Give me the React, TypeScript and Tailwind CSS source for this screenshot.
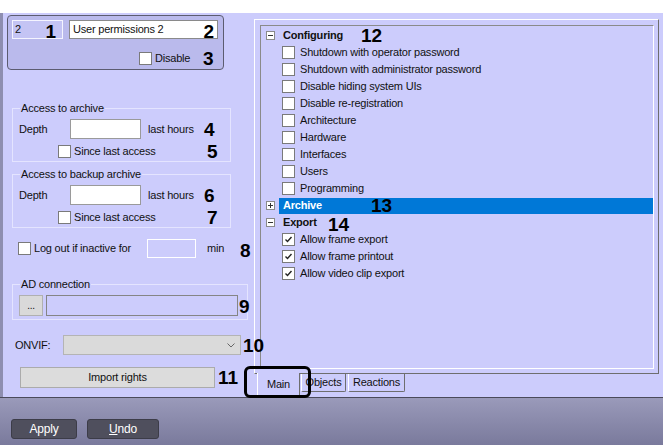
import React from "react";

const font = "font-['Liberation_Sans',Arial,sans-serif]";

function Num({children, className = ""}: {children: React.ReactNode; className?: string}) {
    return (
        <span className={`shrink-0 text-[19px] font-bold leading-none tracking-normal text-black ${className}`}>{children}</span>
    );
}

function Box({checked = false, className = ""}: {checked?: boolean; className?: string}) {
    return (
        <span className={`flex h-[13px] w-[13px] shrink-0 items-center justify-center border border-[#7a7a7a] bg-white ${className}`}>
            {checked && (
                <svg width="9" height="9" viewBox="0 0 9 9">
                    <path d="M1.5 4.5 L3.5 6.5 L7.5 2" fill="none" stroke="#222" strokeWidth="1.4" />
                </svg>
            )}
        </span>
    );
}

function Expander({open}: {open: boolean}) {
    return (
        <span className="relative flex h-[9px] w-[9px] shrink-0 items-center justify-center border border-[#8a8a8a] bg-white">
            <span className="absolute h-px w-[5px] bg-[#333]" />
            {!open && <span className="absolute h-[5px] w-px bg-[#333]" />}
        </span>
    );
}

const configItems = [
    "Shutdown with operator password",
    "Shutdown with administrator password",
    "Disable hiding system UIs",
    "Disable re-registration",
    "Architecture",
    "Hardware",
    "Interfaces",
    "Users",
    "Programming"
];

const exportItems = ["Allow frame export", "Allow frame printout", "Allow video clip export"];

function ArchiveGroup({title, n1, n2}: {title: string; n1: string; n2: string}) {
    return (
        <div className="relative ml-[9px] h-[54px] w-[219px] border border-[#e4e4ff]">
            <span className="absolute -top-[8px] left-[7px] bg-[#ccccfc] px-[1px] leading-[14px]">{title}</span>
            <div className="mt-[10px] flex h-[20px] items-center">
                <span className="ml-[6px] w-[51px] shrink-0">Depth</span>
                <span className="h-[20px] w-[71px] shrink-0 border border-[#9a9a9a] bg-white" />
                <span className="ml-[7px] w-[56px] shrink-0">last hours</span>
                <Num>{n1}</Num>
            </div>
            <div className="mt-[6px] flex h-[13px] items-center">
                <Box className="ml-[45px]" />
                <span className="ml-[3px] w-[133px] shrink-0">Since last access</span>
                <Num>{n2}</Num>
            </div>
        </div>
    );
}

export default function App() {
    return (
        <div className={`flex h-[445px] w-[663px] flex-col overflow-hidden bg-white text-[11px] tracking-[-0.2px] text-[#111] ${font}`}>
            <div className="h-[13px] shrink-0 bg-white" />
            <div className="relative flex h-[384px] shrink-0 border-l-[3px] border-[#8e8eb0] bg-[#ccccfc]">
                {/* left column */}
                <div className="relative z-10 flex w-[251px] shrink-0 flex-col">
                    <div className="ml-[4px] mt-[2px] h-[55px] w-[217px] rounded-[4px] border border-[#5c5c70] bg-[#babaec]">
                        <div className="mt-[4px] flex">
                            <div className="relative ml-[4px] flex h-[19px] w-[51px] shrink-0 items-center border border-[#f4f4ff] bg-[#c4c4f4] pl-[2px]">
                                2
                                <Num className="absolute right-[6px] top-[1px]">1</Num>
                            </div>
                            <div className="relative ml-[6px] flex h-[19px] w-[149px] shrink-0 items-center border border-[#8a8a8a] bg-white pl-[3px]">
                                User permissions 2
                                <Num className="absolute right-[3px] top-[1px]">2</Num>
                            </div>
                        </div>
                        <div className="mt-[10px] flex items-center">
                            <Box className="ml-[131px]" />
                            <span className="ml-[3px] w-[48px] shrink-0">Disable</span>
                            <Num>3</Num>
                        </div>
                    </div>

                    <div className="mt-[38px]">
                        <ArchiveGroup title="Access to archive" n1="4" n2="5" />
                    </div>
                    <div className="mt-[12px]">
                        <ArchiveGroup title="Access to backup archive" n1="6" n2="7" />
                    </div>

                    <div className="mt-[11px] flex h-[19px] items-center">
                        <Box className="ml-[15px]" />
                        <span className="ml-[3px] w-[113px] shrink-0">Log out if inactive for</span>
                        <span className="h-[19px] w-[49px] shrink-0 border border-white" />
                        <span className="ml-[11px] w-[33px] shrink-0">min</span>
                        <Num className="mt-[4px]">8</Num>
                    </div>

                    <div className="relative ml-[9px] mt-[26px] h-[36px] w-[236px] border border-[#e4e4ff]">
                        <span className="absolute -top-[8px] left-[7px] bg-[#ccccfc] px-[1px] leading-[14px]">AD connection</span>
                        <div className="ml-[6px] mt-[10px] flex h-[21px] items-center">
                            <span className="flex h-[21px] w-[24px] shrink-0 items-center justify-center border border-[#b0b0b0] bg-[#d9d9d9] text-[10px]">...</span>
                            <span className="ml-[3px] h-[21px] w-[192px] shrink-0 border border-[#858585] bg-[#ccccfc]" />
                            <Num className="ml-[1px] mt-[2px]">9</Num>
                        </div>
                    </div>

                    <div className="mt-[15px] flex h-[20px] items-center">
                        <span className="ml-[12px] w-[48px] shrink-0">ONVIF:</span>
                        <span className="flex h-[20px] w-[178px] shrink-0 items-center justify-end border border-[#b4b4b4] bg-[#dadada] pr-[5px]">
                            <svg width="8" height="5" viewBox="0 0 8 5">
                                <path d="M0.5 0.5 L4 4 L7.5 0.5" fill="none" stroke="#666" strokeWidth="1" />
                            </svg>
                        </span>
                        <Num className="ml-[2px]">10</Num>
                    </div>

                    <div className="mt-[12px] flex h-[21px] items-center">
                        <span className="ml-[17px] flex h-[21px] w-[195px] shrink-0 items-center justify-center border border-[#ababab] bg-[#dcdcdc]">Import rights</span>
                        <Num className="ml-[3px]">11</Num>
                    </div>
                </div>

                {/* right panel */}
                <div className="flex flex-col">
                    <div className="mt-[6px] h-[355px] w-[405px] border border-t-white border-l-white border-r-[#6e6e6e] border-b-[#6e6e6e] pl-[5px] pr-[5px] pt-[5px]">
                        <div className="h-[344px] w-[394px] border border-t-[#8a8a8a] border-l-[#8a8a8a] border-r-white border-b-white pt-[1px]">
                            <div className="flex h-[17px] items-center">
                                <span className="ml-[5px]"><Expander open /></span>
                                <span className="ml-[8px] w-[78px] font-bold">Configuring</span>
                                <Num>12</Num>
                            </div>
                            {configItems.map((t) => (
                                <div key={t} className="flex h-[17px] items-center">
                                    <Box className="ml-[21px]" />
                                    <span className="ml-[5px]">{t}</span>
                                </div>
                            ))}
                            <div className="flex h-[17px] items-center">
                                <span className="ml-[5px]"><Expander open={false} /></span>
                                <span className="ml-[4px] flex h-[16px] flex-1 items-center bg-[#0078d7] pl-[4px]">
                                    <span className="w-[88px] font-bold text-white">Archive</span>
                                    <Num>13</Num>
                                </span>
                            </div>
                            <div className="flex h-[17px] items-center">
                                <span className="ml-[5px]"><Expander open /></span>
                                <span className="ml-[8px] w-[45px] font-bold">Export</span>
                                <Num className="mt-[3px]">14</Num>
                            </div>
                            {exportItems.map((t) => (
                                <div key={t} className="flex h-[17px] items-center">
                                    <Box checked className="ml-[21px]" />
                                    <span className="ml-[5px]">{t}</span>
                                </div>
                            ))}
                        </div>
                    </div>
                    <div className="relative flex items-start">
                        <span className="-mt-px ml-[3px] flex h-[22px] w-[43px] items-center justify-center border-l border-r border-l-white border-r-[#6e6e6e] bg-[#ccccfc]">Main</span>
                        <span className="ml-px flex h-[18px] w-[45px] items-center justify-center rounded-b-[2px] border border-t-0 border-l-white border-r-[#6e6e6e] border-b-[#6e6e6e]">Objects</span>
                        <span className="ml-[2px] flex h-[18px] w-[57px] items-center justify-center rounded-b-[2px] border border-t-0 border-l-white border-r-[#6e6e6e] border-b-[#6e6e6e]">Reactions</span>
                        <span className="absolute -top-[8px] -left-[10px] h-[32px] w-[67px] rounded-[6px] border-[3px] border-black" />
                    </div>
                </div>
            </div>
            <div className="flex h-[48px] shrink-0 items-start border-t border-[#4a4a5a] bg-gradient-to-b from-[#9a9aba] to-[#7a7a9c]">
                <span className="ml-[11px] mt-[21px] flex h-[20px] w-[66px] items-center justify-center rounded-[3px] border border-[#3c3c48] bg-[#4f4f5d] text-[12px] text-white">Apply</span>
                <span className="ml-[10px] mt-[21px] flex h-[20px] w-[72px] items-center justify-center rounded-[3px] border border-[#3c3c48] bg-[#4f4f5d] text-[12px] text-white">
                    <span className="underline">U</span>ndo
                </span>
            </div>
        </div>
    );
}
